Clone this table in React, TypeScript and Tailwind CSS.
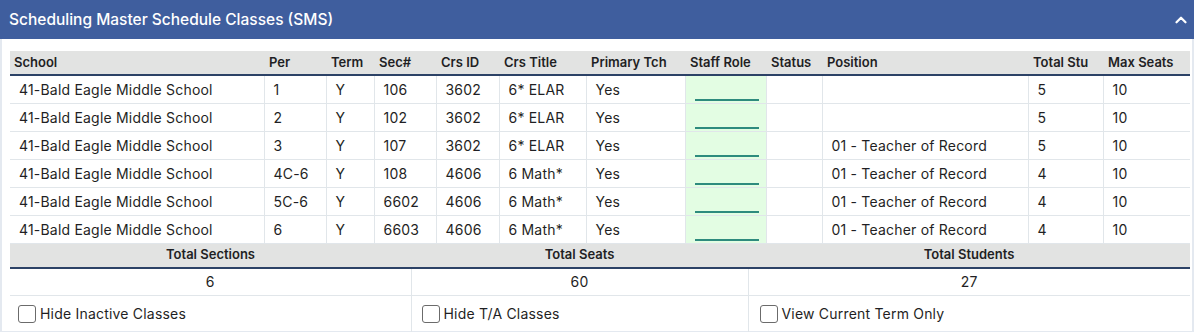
import React from 'react';
import { ChevronUp } from 'lucide-react';

const rows = [
  { per: '1', sec: '106', crs: '3602', title: '6* ELAR', pos: '', stu: '5' },
  { per: '2', sec: '102', crs: '3602', title: '6* ELAR', pos: '', stu: '5' },
  { per: '3', sec: '107', crs: '3602', title: '6* ELAR', pos: '01 - Teacher of Record', stu: '5' },
  { per: '4C-6', sec: '108', crs: '4606', title: '6 Math*', pos: '01 - Teacher of Record', stu: '4' },
  { per: '5C-6', sec: '6602', crs: '4606', title: '6 Math*', pos: '01 - Teacher of Record', stu: '4' },
  { per: '6', sec: '6603', crs: '4606', title: '6 Math*', pos: '01 - Teacher of Record', stu: '4' },
];

const cols = [
  { label: 'School', w: 'w-[254px]', th: 'pl-1' },
  { label: 'Per', w: 'w-[62px]', th: 'pl-[5px]' },
  { label: 'Term', w: 'w-[48px]', th: 'pl-[5px]' },
  { label: 'Sec#', w: 'w-[62px]', th: 'pl-[5px]' },
  { label: 'Crs ID', w: 'w-[63px]', th: 'pl-[5px]' },
  { label: 'Crs Title', w: 'w-[87px]', th: 'pl-[5px]' },
  { label: 'Primary Tch', w: 'w-[99px]', th: 'pl-[5px]' },
  { label: 'Staff Role', w: 'w-[81px]', th: 'pl-[5px]' },
  { label: 'Status', w: 'w-[56px]', th: 'pl-[5px]' },
  { label: 'Position', w: 'w-[206px]', th: 'pl-[5px]' },
  { label: 'Total Stu', w: 'w-[75px]', th: 'pl-[5px]' },
  { label: 'Max Seats', w: 'w-[87px]', th: 'pl-[5px]' },
];

const td = 'h-[28px] p-0 border-b border-l border-[#e1e6ea] pl-[9px] align-middle';

const Check = ({ label }: { label: string }) => (
  <label className="flex items-center">
    <span className="w-[18px] h-[18px] rounded-[3px] border border-[#6b6b6b] bg-white" />
    <span className="ml-[4px]">{label}</span>
  </label>
);

const App = () => {
  return (
    <div className="w-[1194px] h-[332px] bg-white text-[14px] tracking-[0.2px] text-[#1f1f24] font-['Inter','Noto_Sans',sans-serif] overflow-hidden">
      <div className="h-[39px] bg-[#3f5e9e] flex items-center justify-between pl-[9px] pr-[4px]">
        <h2 className="text-white text-[15.5px] tracking-normal font-medium">Scheduling Master Schedule Classes (SMS)</h2>
        <ChevronUp className="w-[18px] h-[18px] text-white" strokeWidth={3} />
      </div>

      <div className="border-x-2 border-b border-[#e4e9f0] h-[293px] pt-[12px] pl-[8px] pr-[2px]">
        <table className="table-fixed border-collapse w-[1180px]">
          <thead>
            <tr className="bg-[#e2e3e2] border-b-2 border-[#2c4266]">
              {cols.map(c => (
                <th key={c.label} className={`${c.w} ${c.th} h-[24px] p-0 text-left font-semibold text-[13px] tracking-normal`}>{c.label}</th>
              ))}
            </tr>
          </thead>
          <tbody>
            {rows.map((r, i) => (
              <tr key={i}>
                <td className={`${td} border-l-0`}>41-Bald Eagle Middle School</td>
                <td className={td}>{r.per}</td>
                <td className={td}>Y</td>
                <td className={td}>{r.sec}</td>
                <td className={td}>{r.crs}</td>
                <td className={td}>{r.title}</td>
                <td className={td}>Yes</td>
                <td className={`${td} bg-[#e3fde3] !align-bottom pb-[2px]`}>
                  <div className="w-[64px] h-[2px] bg-[#2e8b7e]" />
                </td>
                <td className={td}></td>
                <td className={`${td} pl-[7px]`}>{r.pos}</td>
                <td className={`${td} pl-3`}>{r.stu}</td>
                <td className={`${td} pl-3`}>10</td>
              </tr>
            ))}
          </tbody>
        </table>

        <table className="table-fixed border-collapse w-[1180px]">
          <thead>
            <tr className="bg-[#e2e3e2] border-b-2 border-[#2c4266]">
              <th className="w-[401px] h-[24px] p-0 font-semibold text-[13px] tracking-normal">Total Sections</th>
              <th className="w-[337px] h-[24px] p-0 font-semibold text-[13px] tracking-normal">Total Seats</th>
              <th className="w-[442px] h-[24px] p-0 font-semibold text-[13px] tracking-normal">Total Students</th>
            </tr>
          </thead>
          <tbody>
            <tr className="h-[28px] border-b border-[#e1e6ea] text-center">
              <td>6</td>
              <td className="border-l border-[#e1e6ea]">60</td>
              <td className="border-l border-[#e1e6ea]">27</td>
            </tr>
            <tr className="h-[36px]">
              <td className="pl-[8px]"><Check label="Hide Inactive Classes" /></td>
              <td className="pl-[10px] border-l border-[#e1e6ea]"><Check label="Hide T/A Classes" /></td>
              <td className="pl-[11px] border-l border-[#e1e6ea]"><Check label="View Current Term Only" /></td>
            </tr>
          </tbody>
        </table>
      </div>
    </div>
  );
};

export default App;
